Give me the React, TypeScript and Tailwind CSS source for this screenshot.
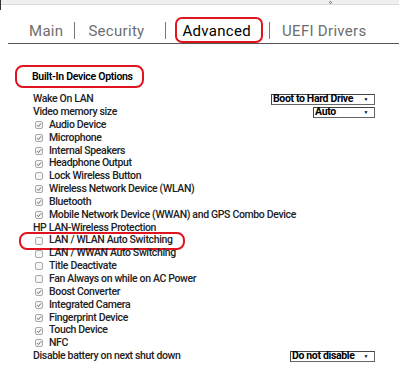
import React from 'react';

type Row =
  | { kind: 'text'; label: string; select?: { value: string; width: string } }
  | { kind: 'check'; label: string; checked: boolean; marked?: boolean };

const rows: Row[] = [
  { kind: 'text', label: 'Wake On LAN', select: { value: 'Boot to Hard Drive', width: 'w-[104px]' } },
  { kind: 'text', label: 'Video memory size', select: { value: 'Auto', width: 'w-[62px]' } },
  { kind: 'check', label: 'Audio Device', checked: true },
  { kind: 'check', label: 'Microphone', checked: true },
  { kind: 'check', label: 'Internal Speakers', checked: true },
  { kind: 'check', label: 'Headphone Output', checked: true },
  { kind: 'check', label: 'Lock Wireless Button', checked: false },
  { kind: 'check', label: 'Wireless Network Device (WLAN)', checked: true },
  { kind: 'check', label: 'Bluetooth', checked: true },
  { kind: 'check', label: 'Mobile Network Device (WWAN) and GPS Combo Device', checked: true },
  { kind: 'text', label: 'HP LAN-Wireless Protection' },
  { kind: 'check', label: 'LAN / WLAN Auto Switching', checked: false, marked: true },
  { kind: 'check', label: 'LAN / WWAN Auto Switching', checked: false },
  { kind: 'check', label: 'Title Deactivate', checked: false },
  { kind: 'check', label: 'Fan Always on while on AC Power', checked: false },
  { kind: 'check', label: 'Boost Converter', checked: true },
  { kind: 'check', label: 'Integrated Camera', checked: true },
  { kind: 'check', label: 'Fingerprint Device', checked: true },
  { kind: 'check', label: 'Touch Device', checked: true },
  { kind: 'check', label: 'NFC', checked: true },
  { kind: 'text', label: 'Disable battery on next shut down', select: { value: 'Do not disable', width: 'w-[85px]' } },
];

function Checkbox({ checked }: { checked: boolean }) {
  return (
    <span className="ml-[2px] flex h-[8px] w-[8px] shrink-0 items-center justify-center rounded-[2px] border border-[#a8a8a8] bg-[#f6f6f6]">
      {checked && (
        <svg width="6" height="6" viewBox="0 0 6 6">
          <path d="M1 3.2 L2.4 4.6 L5 1.4" fill="none" stroke="#666" strokeWidth="1" />
        </svg>
      )}
    </span>
  );
}

function Select({ value, width }: { value: string; width: string }) {
  return (
    <span className={`flex h-[11px] ${width} items-center justify-between border border-[#666] border-t-[#444] border-l-[#444] bg-white pr-[6px] text-[10.5px] font-bold leading-none text-black`}>
      <span className="pl-[1px]">{value}</span>
      <span className="text-[5px]">▼</span>
    </span>
  );
}

function Sep({ className }: { className: string }) {
  return <span className={`mb-[2px] h-[17px] w-px bg-[#777] ${className}`} />;
}

export default function App() {
  return (
    <div className="relative h-[369px] w-[399px] overflow-hidden bg-white font-['Roboto',sans-serif] text-[#222]">
      <div className="absolute left-0 top-0 h-[10px] w-px bg-[#333]" />
      <div className="flex h-[5px] justify-end border-b border-[#dcdcdc] bg-[#efefef] pr-[67px]">
        <span className="mt-[1px] h-[3px] w-[3px] rounded-full border border-[#777]" />
      </div>

      <div className="ml-[8px] flex h-[39px] items-end border-b border-[#555] pb-[2px] pl-[21px] text-[15px] leading-[20px] tracking-[0.3px]">
        <span className="text-[#6e6e6e]">Main</span>
        <Sep className="ml-[11px] mr-[13px]" />
        <span className="text-[#6e6e6e]">Security</span>
        <Sep className="ml-[20px] mr-[17px]" />
        <span className="relative text-black">
          Advanced
          <span className="absolute -bottom-[2px] -left-[8px] -right-[12px] -top-[4px] rounded-[7px] border-2 border-[#e0141e]" />
        </span>
        <Sep className="ml-[18px] mr-[12px]" />
        <span className="text-[#6e6e6e]">UEFI Drivers</span>
      </div>

      <div className="pl-[32px] pt-[19px]">
        <span className="relative text-[10.5px] font-semibold leading-none tracking-[-0.3px] text-black">
          Built-In Device Options
          <span className="absolute -bottom-[5px] -left-[17px] -right-[11px] -top-[5px] rounded-[8px] border-2 border-[#e0141e]" />
        </span>
      </div>

      <div className="mt-[6px] pl-[33px] pr-[24px]">
        {rows.map((r) => (
          <div key={r.label} className="flex h-[12.85px] items-center justify-between text-[10.5px] font-medium leading-none tracking-[-0.35px]">
            {r.kind === 'check' ? (
              <span className="relative flex items-center gap-[6px]">
                <Checkbox checked={r.checked} />
                <span>{r.label}</span>
                {r.marked && (
                  <span className="absolute -bottom-[4px] -left-[14px] -right-[12px] -top-[3px] rounded-[8px] border-2 border-[#e0141e]" />
                )}
              </span>
            ) : (
              <span>{r.label}</span>
            )}
            {r.kind === 'text' && r.select && <Select value={r.select.value} width={r.select.width} />}
          </div>
        ))}
      </div>
    </div>
  );
}
